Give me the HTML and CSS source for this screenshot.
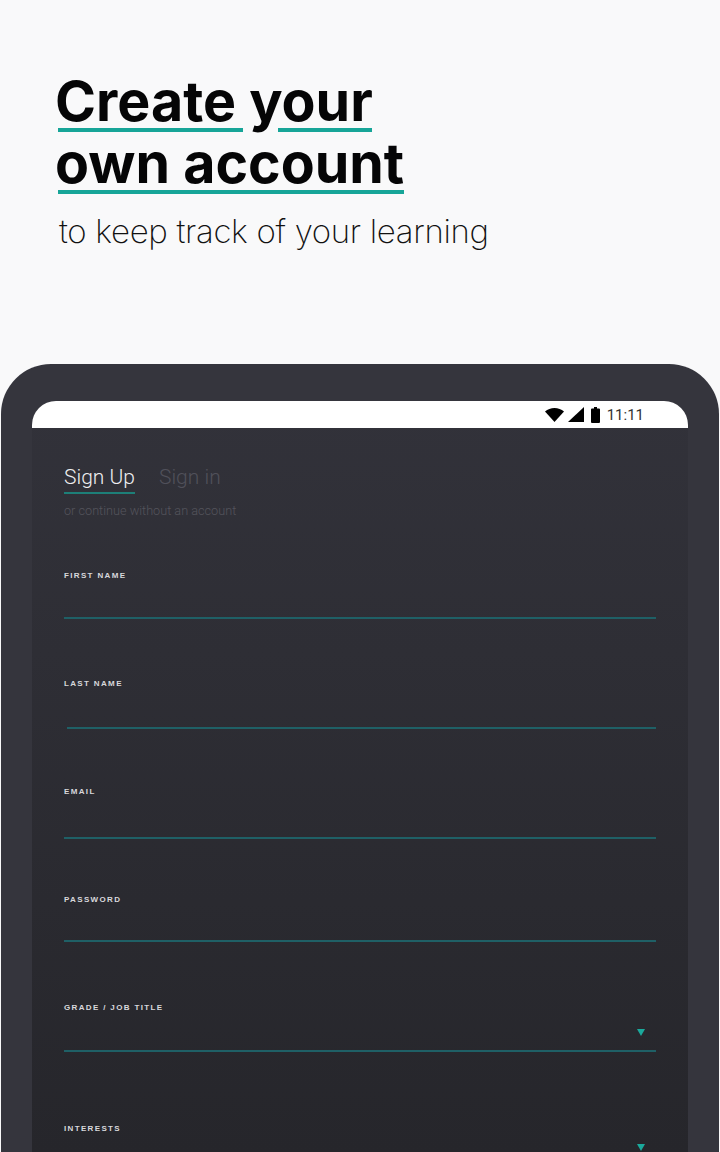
FILE: index.html
```html
<!DOCTYPE html>
<html lang="en">
<head>
  <meta charset="UTF-8" />
  <meta name="viewport" content="width=device-width, initial-scale=1.0"/>
  <title>Create your own account</title>
  <link rel="stylesheet" href="styles.css">
</head>
<body>
  <div class="intro">
    <h1><span class="mark wide">Create</span> y<span class="mark tight">our</span><br><span class="mark">own account</span></h1>
    <p>to keep track of your learning</p>
  </div>
  <div class="device">
    <div class="screen">
      <div class="status">
        <svg class="icon-wifi" width="19" height="14" viewBox="0 0 19 14"><path d="M0 3.600C2.600 1.300 5.900 0 9.500 0s6.900 1.300 9.500 3.600L9.500 14z"/></svg>
        <svg class="icon-signal" width="16" height="15" viewBox="0 0 16 15"><path d="M16 0v15H0z"/></svg>
        <svg class="icon-battery" width="9" height="16" viewBox="0 0 9 16"><path d="M3 0h3v1.500h2a1 1 0 0 1 1 1V15a1 1 0 0 1-1 1H1a1 1 0 0 1-1-1V2.500a1 1 0 0 1 1-1h2z"/></svg>
        <span class="clock">11:11</span>
      </div>
      <div class="content">
        <div class="tabs">
          <div class="tab active">Sign Up</div>
          <div class="tab">Sign in</div>
        </div>
        <div class="skip">or continue without an account</div>

        <div class="field first">
          <label>FIRST NAME</label>
          <div class="line"></div>
        </div>
        <div class="field last">
          <label>LAST NAME</label>
          <div class="line"></div>
        </div>
        <div class="field email">
          <label>EMAIL</label>
          <div class="line"></div>
        </div>
        <div class="field password">
          <label>PASSWORD</label>
          <div class="line"></div>
        </div>
        <div class="field grade">
          <label>GRADE / JOB TITLE</label>
          <div class="arrow"></div>
          <div class="line"></div>
        </div>
        <div class="field interests">
          <label>INTERESTS</label>
          <div class="arrow"></div>
        </div>
      </div>
    </div>
  </div>
</body>
</html>
```

FILE: styles.css
```css
* { box-sizing: border-box; }
body {
  margin: 0;
  height: 1152px;
  overflow: hidden;
  background: #f9f9fa;
  font-family: Inter, sans-serif;
}

.intro {
  height: 364px;
  padding: 70px 0 0 55px;
}

.intro h1 {
  margin: 0;
  font-size: 55.5px;
  line-height: 62px;
  font-weight: 700;
  color: #050506;
}

.mark {
  position: relative;
}

.mark::after {
  content: "";
  position: absolute;
  left: 3px;
  right: 0;
  bottom: 2px;
  height: 4px;
  background: #17a598;
}

.mark.wide::after { right: -7px; }
.mark.tight::after { left: -4px; right: 1px; }

.intro p {
  margin: 15px 0 0 4px;
  font-size: 33px;
  line-height: 44px;
  font-weight: 200;
  letter-spacing: -0.33px;
  color: #111;
}

.device {
  height: 788px;
  margin: 0 1px;
  padding: 37px 31px 0;
  background: #35353d;
  border-radius: 50px 50px 0 0;
}

.screen {
  height: 751px;
  border-radius: 24px 24px 0 0;
  overflow: hidden;
  background: linear-gradient(to bottom, #32323a, #26262b);
}

.status {
  height: 27px;
  background: white;
  display: flex;
  justify-content: flex-end;
  align-items: center;
  padding-right: 44px;
  color: #333;
}

.status svg { display: block; fill: #000; }
.icon-wifi { margin-right: 4px; }
.icon-signal { margin-right: 7px; }
.icon-battery { margin-right: 7px; }

.clock {
  font-family: Roboto, sans-serif;
  font-size: 15px;
}

.content {
  padding: 37px 32px 0;
}

.tabs {
  display: flex;
  gap: 24px;
}

.tab {
  height: 29px;
  font-size: 21px;
  line-height: 25px;
  font-family: Roboto, sans-serif;
  font-weight: 300;
  color: #50505a;
}

.tab.active {
  color: #eeeef0;
  border-bottom: 2px solid #1d7f78;
}

.skip {
  margin-top: 9px;
  font-family: Roboto, sans-serif;
  font-weight: 300;
  font-size: 12.7px;
  line-height: 16px;
  color: #54545c;
}

.field {
  position: relative;
}

.field label {
  display: block;
  font-family: "Liberation Sans", sans-serif;
  font-size: 8px;
  line-height: 10px;
  font-weight: bold;
  letter-spacing: 1.35px;
  color: #d8d8dc;
}

.line {
  height: 2px;
  background: #1f6066;
}

.field.first { margin-top: 52px; }
.field.first .line { margin-top: 36px; }

.field.last { margin-top: 60px; }
.field.last .line { margin: 38px 0 0 3px; }

.field.email { margin-top: 58px; }
.field.email .line { margin-top: 40px; }

.field.password { margin-top: 56px; }
.field.password .line { margin-top: 35px; }

.field.grade { margin-top: 61px; }
.field.grade .line { margin-top: 37px; }

.field.interests { margin-top: 72px; }

.arrow {
  position: absolute;
  right: 11px;
  top: 26px;
  width: 0;
  height: 0;
  border-left: 4.5px solid transparent;
  border-right: 4.5px solid transparent;
  border-top: 7px solid #1ba99c;
}

.field.interests .arrow { top: 20px; }
```
